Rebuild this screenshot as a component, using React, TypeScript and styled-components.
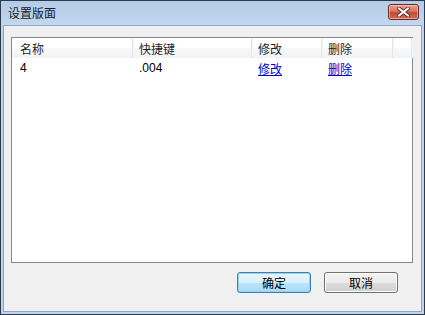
import styled, { createGlobalStyle } from 'styled-components';

const GlobalStyle = createGlobalStyle`
  html, body {
    margin: 0;
    padding: 0;
    background: #ffffff;
  }
  body {
    font-family: "Liberation Sans", "Noto Sans CJK SC", sans-serif;
    font-size: 12px;
  }
`;

type Row = {
  name: string;
  hotkey: string;
};

const rows: Row[] = [{ name: '4', hotkey: '.004' }];

const Window = styled.div`
  width: 425px;
  height: 315px;
  box-sizing: border-box;
  border: 1px solid #2b3a4d;
  background: #bfd4ec;
  display: flex;
  flex-direction: column;
`;

const TitleBar = styled.div`
  height: 24px;
  display: flex;
  align-items: center;
  justify-content: space-between;
  padding: 0 5px 0 7px;
  background: linear-gradient(to bottom, #b4cbe6 0%, #bcd2ec 60%, #c3d8ef 100%);
`;

const Title = styled.span`
  font-family: "Noto Sans CJK SC", sans-serif;
  font-size: 12px;
  color: #1a1a1a;
  margin-top: -1px;
`;

const CloseButton = styled.button`
  width: 31px;
  height: 16px;
  margin-top: -3px;
  padding: 0;
  border: 1px solid #6d2a22;
  border-radius: 3px;
  background: linear-gradient(to bottom, #e8a493 0%, #d7725e 45%, #c24a33 55%, #d0705a 100%);
  box-shadow: inset 0 0 0 1px rgba(255, 210, 200, 0.55);
  display: flex;
  align-items: center;
  justify-content: center;
`;

const Client = styled.div`
  flex: 1;
  margin: 0 2px 2px 2px;
  border: 1px solid #8fa5bf;
  background: #f0f0f0;
  display: flex;
  flex-direction: column;
  padding: 11px 8px 0 7px;
`;

const ListBox = styled.div`
  height: 226px;
  box-sizing: border-box;
  border: 1px solid #828790;
  background: #ffffff;
  display: flex;
  flex-direction: column;
`;

const Columns = '121px 119px 70px 71px 1fr';

const HeaderRow = styled.div`
  display: grid;
  grid-template-columns: ${Columns};
  height: 20px;
  background: linear-gradient(to bottom, #ffffff 0%, #ffffff 50%, #f7f8fa 51%, #f2f3f5 100%);
`;

const HeaderCell = styled.div<{ $pad: number }>`
  display: flex;
  align-items: center;
  padding-left: ${(p) => p.$pad}px;
  border-right: 1px solid #e3e5e8;
  box-shadow: 1px 0 0 #f6f6f7;
  font-family: "Noto Sans CJK SC", sans-serif;
  font-size: 12px;
  color: #1e1e1e;
`;

const DataRow = styled.div`
  display: grid;
  grid-template-columns: ${Columns};
  height: 18px;
  margin-top: 1px;
`;

const Cell = styled.div<{ $pad: number }>`
  display: flex;
  align-items: center;
  padding-left: ${(p) => p.$pad}px;
  font-size: 12px;
  color: #000000;
`;

const Link = styled.a`
  font-family: "Noto Sans CJK SC", sans-serif;
  font-size: 12px;
  color: #0000cc;
  text-decoration: underline;
  cursor: pointer;
`;

const Footer = styled.div`
  display: flex;
  justify-content: flex-end;
  gap: 13px;
  padding: 9px 15px 0 0;
`;

const Button = styled.button<{ $primary?: boolean }>`
  width: 74px;
  height: 21px;
  padding: 0;
  border-radius: 3px;
  font-family: "Noto Sans CJK SC", sans-serif;
  font-size: 12px;
  color: #000000;
  border: 1px solid ${(p) => (p.$primary ? '#3c7fb1' : '#707070')};
  background: ${(p) =>
    p.$primary
      ? 'linear-gradient(to bottom, #eaf6fd 0%, #d9f0fc 50%, #bee6fd 51%, #a7d9f5 100%)'
      : 'linear-gradient(to bottom, #f2f2f2 0%, #ebebeb 50%, #dddddd 51%, #cfcfcf 100%)'};
  box-shadow: ${(p) =>
    p.$primary ? 'inset 0 0 0 1px #9ad0ee' : 'inset 0 0 0 1px #fcfcfc'};
`;

function CloseGlyph() {
  return (
    <svg width="13" height="10" viewBox="0 0 13 10">
      <path
        d="M2 1.5 L11 8.5 M11 1.5 L2 8.5"
        stroke="#5a1d16"
        strokeWidth="3.6"
        strokeLinecap="square"
      />
      <path
        d="M2 1.5 L11 8.5 M11 1.5 L2 8.5"
        stroke="#ffffff"
        strokeWidth="2"
        strokeLinecap="square"
      />
    </svg>
  );
}

export default function App() {
  return (
    <>
      <GlobalStyle />
      <Window>
        <TitleBar>
          <Title>设置版面</Title>
          <CloseButton aria-label="关闭">
            <CloseGlyph />
          </CloseButton>
        </TitleBar>
        <Client>
          <ListBox>
            <HeaderRow>
              <HeaderCell $pad={8}>名称</HeaderCell>
              <HeaderCell $pad={6}>快捷键</HeaderCell>
              <HeaderCell $pad={6}>修改</HeaderCell>
              <HeaderCell $pad={6}>删除</HeaderCell>
              <HeaderCell $pad={0} />
            </HeaderRow>
            {rows.map((r) => (
              <DataRow key={r.name}>
                <Cell $pad={8}>{r.name}</Cell>
                <Cell $pad={6}>{r.hotkey}</Cell>
                <Cell $pad={6}>
                  <Link>修改</Link>
                </Cell>
                <Cell $pad={6}>
                  <Link>删除</Link>
                </Cell>
                <Cell $pad={0} />
              </DataRow>
            ))}
          </ListBox>
          <Footer>
            <Button $primary>确定</Button>
            <Button>取消</Button>
          </Footer>
        </Client>
      </Window>
    </>
  );
}
